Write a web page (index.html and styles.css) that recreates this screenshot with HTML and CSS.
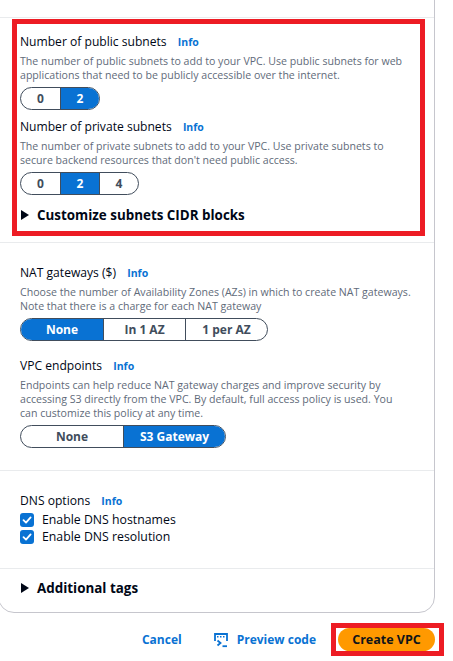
FILE: index.html
```html
<!DOCTYPE html>
<html lang="en">
<head>
<meta charset="utf-8">
<link rel="stylesheet" href="styles.css">
</head>
<body>
<div class="card">
  <div class="top-space"></div>
  <div class="section section-hl">
    <div class="highlight">
      <div class="field">
        <div class="label">Number of public subnets <a class="info">Info</a></div>
        <div class="desc">The number of public subnets to add to your VPC. Use public subnets for web applications that need to be publicly accessible over the internet.</div>
        <div class="seg">
          <span class="opt w39">0</span><span class="opt w39 on">2</span>
        </div>
      </div>
      <div class="field field-2">
        <div class="label">Number of private subnets <a class="info">Info</a></div>
        <div class="desc">The number of private subnets to add to your VPC. Use private subnets to secure backend resources that don't need public access.</div>
        <div class="seg">
          <span class="opt w39">0</span><span class="opt w39 on">2</span><span class="opt w39">4</span>
        </div>
      </div>
      <div class="expander exp-cidr"><span class="caret"></span>Customize subnets CIDR blocks</div>
    </div>
  </div>
  <div class="section section-nat">
    <div class="field">
      <div class="label">NAT gateways ($) <a class="info">Info</a></div>
      <div class="desc">Choose the number of Availability Zones (AZs) in which to create NAT gateways. Note that there is a charge for each NAT gateway</div>
      <div class="seg">
        <span class="opt w82 on">None</span><span class="opt w82">In 1 AZ</span><span class="opt w82">1 per AZ</span>
      </div>
    </div>
    <div class="field field-vpc">
      <div class="label">VPC endpoints <a class="info">Info</a></div>
      <div class="desc desc-vpc">Endpoints can help reduce NAT gateway charges and improve security by accessing S3 directly from the VPC. By default, full access policy is used. You can customize this policy at any time.</div>
      <div class="seg">
        <span class="opt w102">None</span><span class="opt w102 on">S3 Gateway</span>
      </div>
    </div>
  </div>
  <div class="section section-dns">
    <div class="label">DNS options <a class="info">Info</a></div>
    <div class="checks">
      <label class="check"><span class="box"><svg width="10" height="10" viewBox="0 0 10 10"><path d="M1.5 5.2 L4 7.6 L8.6 2.4" fill="none" stroke="#fff" stroke-width="1.8" stroke-linecap="round" stroke-linejoin="round"/></svg></span>Enable DNS hostnames</label>
      <label class="check"><span class="box"><svg width="10" height="10" viewBox="0 0 10 10"><path d="M1.5 5.2 L4 7.6 L8.6 2.4" fill="none" stroke="#fff" stroke-width="1.8" stroke-linecap="round" stroke-linejoin="round"/></svg></span>Enable DNS resolution</label>
    </div>
  </div>
  <div class="section section-tags">
    <div class="expander"><span class="caret"></span>Additional tags</div>
  </div>
</div>
<div class="actions">
  <a class="link-btn cancel">Cancel</a>
  <a class="link-btn preview"><svg class="pv-icon" width="16" height="16" viewBox="0 0 16 16"><path d="M2 9 V2 H14 V9" fill="none" stroke="#0972d3" stroke-width="1.8"/><rect x="4" y="4" width="1.5" height="1.5" fill="#0972d3"/><rect x="7" y="4" width="1.5" height="1.5" fill="#0972d3"/><rect x="10" y="4" width="1.5" height="1.5" fill="#0972d3"/><path d="M4.5 8.5 L7.5 11 L4.5 13.5" fill="none" stroke="#0972d3" stroke-width="1.8"/><path d="M9.5 14.2 H14" stroke="#0972d3" stroke-width="1.8"/></svg>Preview code</a>
  <div class="hl-btn"><button class="primary">Create VPC</button></div>
</div>
</body>
</html>
```

FILE: styles.css
```css
* { box-sizing: border-box; }
html, body { margin: 0; padding: 0; background: #fff; }
body {
  font-family: "Open Sans", "Noto Sans", sans-serif;
  color: #000716;
  width: 453px;
  height: 661px;
  overflow: hidden;
}
.card {
  margin: -20px 0 0 -2px;
  width: 437px;
  border: 1px solid #c6c6cd;
  border-radius: 16px;
  background: #fff;
}
.top-space { height: 36px; }
.section { border-top: 1px solid #e9ebed; }
.section-hl { padding: 1px 9px 6px 13px; }
.highlight {
  border: 5px solid #ed1c24;
  padding: 9px 8px 7px 3px;
}
.label {
  font-size: 12.1px;
  line-height: 18px;
  color: #000716;
}
.info {
  font-size: 10.5px;
  font-weight: 700;
  color: #0972d3;
  margin-left: 8px;
}
.desc {
  font-size: 10.6px;
  line-height: 14px;
  color: #5f6b7a;
  margin-top: 3px;
}
.desc-vpc { max-width: 382px; }
.seg {
  display: inline-flex;
  margin-top: 5px;
  height: 23px;
  border: 1px solid #414d5c;
  border-radius: 12px;
  overflow: hidden;
}
.opt {
  display: flex;
  align-items: center;
  justify-content: center;
  font-size: 12px;
  font-weight: 700;
  color: #414d5c;
  border-left: 1px solid #414d5c;
}
.opt:first-child { border-left: none; }
.opt.on { background: #0972d3; color: #fff; }
.w39 { width: 39px; }
.w82 { width: 82px; }
.w102 { width: 102px; }
.field-2 { margin-top: 8px; }
.expander {
  display: flex;
  align-items: center;
  font-size: 13.4px;
  line-height: 18px;
  font-weight: 700;
  color: #000716;
}
.exp-cidr { margin-top: 11px; }
.caret {
  width: 0; height: 0;
  border-top: 5px solid transparent;
  border-bottom: 5px solid transparent;
  border-left: 8px solid #000716;
  margin: 0 8px 0 1px;
}
.section-nat { padding: 21px 18px 22px 21px; }
.field-vpc { margin-top: 16px; }
.section-dns { padding: 21px 0 23px 21px; }
.checks { padding-top: 1px; }
.check {
  display: flex;
  align-items: center;
  height: 17px;
  font-size: 12.3px;
  color: #000716;
}
.box {
  width: 14px; height: 14px;
  border-radius: 3px;
  background: #0972d3;
  display: flex;
  align-items: center;
  justify-content: center;
  margin-right: 8px;
}
.section-tags { padding: 10px 0 15px 21px; }
.actions {
  display: flex;
  align-items: center;
  justify-content: flex-end;
  padding: 10px 9px 0 0;
}
.link-btn {
  font-size: 12px;
  font-weight: 700;
  color: #0972d3;
  display: flex;
  align-items: center;
}
.cancel { margin-right: 31px; }
.pv-icon { margin-right: 8px; }
.preview { margin-right: 15px; }
.hl-btn {
  border: 5px solid #ed1c24;
  padding: 0 4px 0 2px;
}
.primary {
  display: block;
  font-family: inherit;
  height: 23px;
  width: 97px;
  border: none;
  border-radius: 12px;
  background: #ff9900;
  color: #0f141a;
  font-size: 12.5px;
  font-weight: 700;
  padding: 0;
}
```
